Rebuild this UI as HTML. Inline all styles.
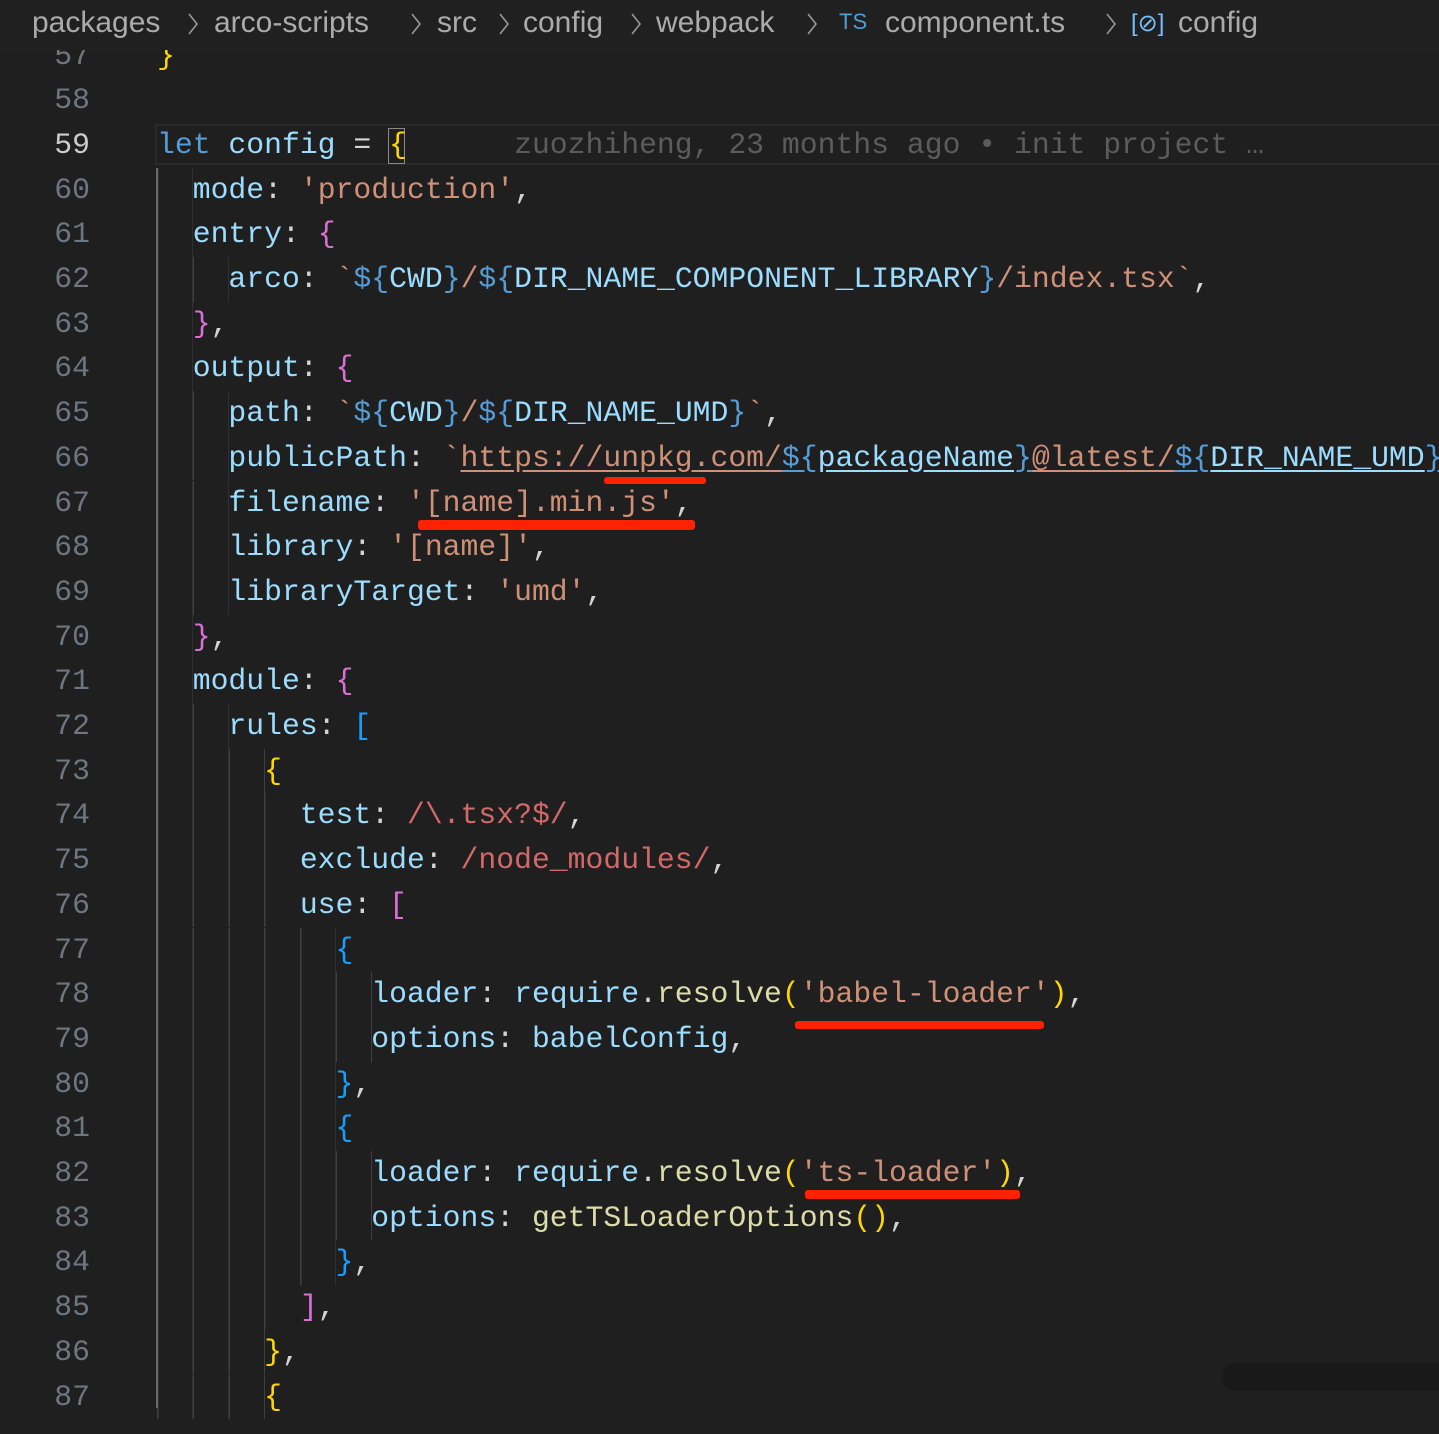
<!DOCTYPE html>
<html><head><meta charset="utf-8"><style>
html,body{margin:0;padding:0;background:#1f1f1f;width:1439px;height:1398px;overflow:hidden}
.ed{position:absolute;left:0;top:33.5px;width:1439px;height:1400px;font-family:"Liberation Mono",monospace;font-size:29.75px}
.ln{position:absolute;left:0;width:90px;text-align:right;color:#6e7681;height:44.7px;line-height:44.7px}
.ln.a{color:#cccccc}
.cl{position:absolute;left:157px;height:44.7px;line-height:44.7px;white-space:pre;color:#d4d4d4;width:1400px;background-repeat:no-repeat;background-image:repeating-linear-gradient(90deg,#404040 0 1.5px,transparent 1.5px 35.7px)}
.ng{background-image:none}
.k{color:#9cdcfe}.s{color:#ce9178}.y{color:#ffd700}.m{color:#da70d6}.b{color:#179fff}.kw{color:#569cd6}.f{color:#dcdcaa}.r{color:#d16969}.g{color:#5c5c5c}
.u{text-decoration:underline;text-underline-offset:4px}
.bc{position:absolute;left:0;top:0;width:1439px;height:50px;background:#202020;font-family:"Liberation Sans",sans-serif;font-size:30px;color:#ababab;z-index:5}
.bc span{position:absolute;top:6px;white-space:nowrap}
.bc svg{position:absolute;top:12px}
.red{position:absolute;background:#ff2200;border-radius:3px;z-index:4}
</style></head><body>
<div class="bc">
<span style="left:32px">packages</span><svg style="left:187px" width="12" height="24"><path d="M2 2 L10 12 L2 22" stroke="#999" stroke-width="1.6" fill="none"/></svg>
<span style="left:214px">arco-scripts</span><svg style="left:410px" width="12" height="24"><path d="M2 2 L10 12 L2 22" stroke="#999" stroke-width="1.6" fill="none"/></svg>
<span style="left:437px">src</span><svg style="left:498px" width="12" height="24"><path d="M2 2 L10 12 L2 22" stroke="#999" stroke-width="1.6" fill="none"/></svg>
<span style="left:523px">config</span><svg style="left:630px" width="12" height="24"><path d="M2 2 L10 12 L2 22" stroke="#999" stroke-width="1.6" fill="none"/></svg>
<span style="left:656px">webpack</span><svg style="left:806px" width="12" height="24"><path d="M2 2 L10 12 L2 22" stroke="#999" stroke-width="1.6" fill="none"/></svg>
<span style="left:839px;top:9px;font-size:22px;color:#4d9fd0">TS</span>
<span style="left:885px">component.ts</span><svg style="left:1105px" width="12" height="24"><path d="M2 2 L10 12 L2 22" stroke="#999" stroke-width="1.6" fill="none"/></svg>
<span style="left:1131px;top:9px;font-size:24px;color:#75beff">[⊘]</span>
<span style="left:1178px">config</span>
</div>
<div style="position:absolute;left:155px;top:124px;width:1300px;height:41px;border:2px solid #2a2a2a;box-sizing:border-box"></div>
<div style="position:absolute;left:388px;top:128px;width:17px;height:36px;border:1px solid #888;box-sizing:border-box"></div>
<div class="ed">
<div class="ln" style="top:0">57</div><div class="cl ng" style="top:0"><span class="y">}</span></div>
<div class="ln" style="top:44.7px">58</div><div class="cl ng" style="top:44.7px"></div>
<div class="ln a" style="top:89.4px">59</div><div class="cl ng" style="top:89.4px"><span class="kw">let</span> <span class="k">config</span> = <span class="y">{</span>      <span class="g">zuozhiheng, 23 months ago • init project …</span></div>
<div class="ln" style="top:134.1px">60</div><div class="cl" style="top:134.1px;background-size:36px 100%">  <span class="k">mode</span>: <span class="s">'production'</span>,</div>
<div class="ln" style="top:178.8px">61</div><div class="cl" style="top:178.8px;background-size:36px 100%">  <span class="k">entry</span>: <span class="m">{</span></div>
<div class="ln" style="top:223.5px">62</div><div class="cl" style="top:223.5px;background-size:72px 100%">    <span class="k">arco</span>: <span class="s">`</span><span class="kw">${</span><span class="k">CWD</span><span class="kw">}</span><span class="s">/</span><span class="kw">${</span><span class="k">DIR_NAME_COMPONENT_LIBRARY</span><span class="kw">}</span><span class="s">/index.tsx`</span>,</div>
<div class="ln" style="top:268.2px">63</div><div class="cl" style="top:268.2px;background-size:36px 100%">  <span class="m">}</span>,</div>
<div class="ln" style="top:312.9px">64</div><div class="cl" style="top:312.9px;background-size:36px 100%">  <span class="k">output</span>: <span class="m">{</span></div>
<div class="ln" style="top:357.6px">65</div><div class="cl" style="top:357.6px;background-size:72px 100%">    <span class="k">path</span>: <span class="s">`</span><span class="kw">${</span><span class="k">CWD</span><span class="kw">}</span><span class="s">/</span><span class="kw">${</span><span class="k">DIR_NAME_UMD</span><span class="kw">}</span><span class="s">`</span>,</div>
<div class="ln" style="top:402.3px">66</div><div class="cl" style="top:402.3px;background-size:72px 100%">    <span class="k">publicPath</span>: <span class="s">`</span><span class="s u">https://unpkg.com/</span><span class="kw u">${</span><span class="k u">packageName</span><span class="kw u">}</span><span class="s u">@latest/</span><span class="kw u">${</span><span class="k u">DIR_NAME_UMD</span><span class="kw u">}</span></div>
<div class="ln" style="top:447px">67</div><div class="cl" style="top:447px;background-size:72px 100%">    <span class="k">filename</span>: <span class="s">'[name].min.js'</span>,</div>
<div class="ln" style="top:491.7px">68</div><div class="cl" style="top:491.7px;background-size:72px 100%">    <span class="k">library</span>: <span class="s">'[name]'</span>,</div>
<div class="ln" style="top:536.4px">69</div><div class="cl" style="top:536.4px;background-size:72px 100%">    <span class="k">libraryTarget</span>: <span class="s">'umd'</span>,</div>
<div class="ln" style="top:581.1px">70</div><div class="cl" style="top:581.1px;background-size:36px 100%">  <span class="m">}</span>,</div>
<div class="ln" style="top:625.8px">71</div><div class="cl" style="top:625.8px;background-size:36px 100%">  <span class="k">module</span>: <span class="m">{</span></div>
<div class="ln" style="top:670.5px">72</div><div class="cl" style="top:670.5px;background-size:72px 100%">    <span class="k">rules</span>: <span class="b">[</span></div>
<div class="ln" style="top:715.2px">73</div><div class="cl" style="top:715.2px;background-size:108px 100%">      <span class="y">{</span></div>
<div class="ln" style="top:759.9px">74</div><div class="cl" style="top:759.9px;background-size:143px 100%">        <span class="k">test</span>: <span class="r">/\.tsx?$/</span>,</div>
<div class="ln" style="top:804.6px">75</div><div class="cl" style="top:804.6px;background-size:143px 100%">        <span class="k">exclude</span>: <span class="r">/node_modules/</span>,</div>
<div class="ln" style="top:849.3px">76</div><div class="cl" style="top:849.3px;background-size:143px 100%">        <span class="k">use</span>: <span class="m">[</span></div>
<div class="ln" style="top:894px">77</div><div class="cl" style="top:894px;background-size:179px 100%">          <span class="b">{</span></div>
<div class="ln" style="top:938.7px">78</div><div class="cl" style="top:938.7px;background-size:215px 100%">            <span class="k">loader</span>: <span class="k">require</span>.<span class="f">resolve</span><span class="y">(</span><span class="s">'babel-loader'</span><span class="y">)</span>,</div>
<div class="ln" style="top:983.4px">79</div><div class="cl" style="top:983.4px;background-size:215px 100%">            <span class="k">options</span>: <span class="k">babelConfig</span>,</div>
<div class="ln" style="top:1028.1px">80</div><div class="cl" style="top:1028.1px;background-size:179px 100%">          <span class="b">}</span>,</div>
<div class="ln" style="top:1072.8px">81</div><div class="cl" style="top:1072.8px;background-size:179px 100%">          <span class="b">{</span></div>
<div class="ln" style="top:1117.5px">82</div><div class="cl" style="top:1117.5px;background-size:215px 100%">            <span class="k">loader</span>: <span class="k">require</span>.<span class="f">resolve</span><span class="y">(</span><span class="s">'ts-loader'</span><span class="y">)</span>,</div>
<div class="ln" style="top:1162.2px">83</div><div class="cl" style="top:1162.2px;background-size:215px 100%">            <span class="k">options</span>: <span class="f">getTSLoaderOptions</span><span class="y">()</span>,</div>
<div class="ln" style="top:1206.9px">84</div><div class="cl" style="top:1206.9px;background-size:179px 100%">          <span class="b">}</span>,</div>
<div class="ln" style="top:1251.6px">85</div><div class="cl" style="top:1251.6px;background-size:143px 100%">        <span class="m">]</span>,</div>
<div class="ln" style="top:1296.3px">86</div><div class="cl" style="top:1296.3px;background-size:108px 100%">      <span class="y">}</span>,</div>
<div class="ln" style="top:1341px">87</div><div class="cl" style="top:1341px;background-size:108px 100%">      <span class="y">{</span></div>
</div>
<div style="position:absolute;left:156px;top:168px;width:2px;height:1240px;background:#6a6a6a"></div>
<div class="red" style="left:604px;top:477px;width:102px;height:7px"></div>
<div class="red" style="left:418px;top:520px;width:277px;height:10px"></div>
<div class="red" style="left:795px;top:1021px;width:249px;height:8px"></div>
<div class="red" style="left:805px;top:1190px;width:215px;height:9px"></div>
<div style="position:absolute;left:1222px;top:1363px;width:230px;height:28px;background:#191919;border-radius:14px"></div>
</body></html>
